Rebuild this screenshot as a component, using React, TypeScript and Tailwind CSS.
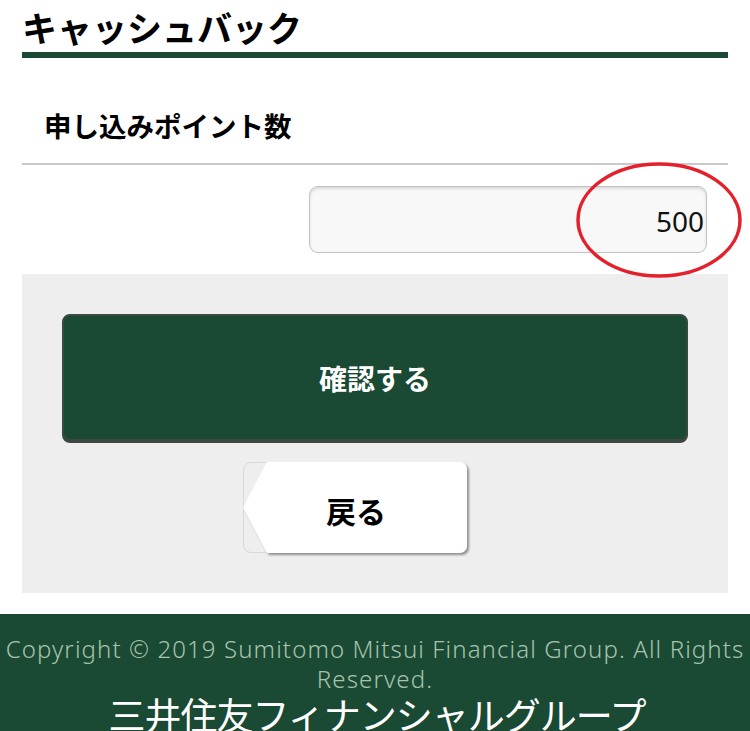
import React from "react";

const jp = { fontFamily: '"Noto Sans CJK JP", "Noto Sans", sans-serif' };

export default function App() {
  return (
    <div className="relative w-[750px] h-[731px] overflow-hidden bg-white" style={jp}>
      <div className="px-[22px]">
        <div className="h-[58px] border-b-[6px] border-[#1b4a34] flex items-start">
          <h1 className="text-[35px] leading-[56px] font-bold text-black -mt-[1px]">キャッシュバック</h1>
        </div>
        <div className="h-[107px] border-b-2 border-[#c9c9c9] flex items-start pt-[54px] pl-[22px]">
          <span className="text-[27.5px] font-bold text-black leading-none">申し込みポイント数</span>
        </div>
        <div className="pt-[21px] pb-[21px] flex justify-end pr-[21px]">
          <div className="w-[398px] h-[67px] rounded-[9px] border border-[#c2c2c2] bg-[#f8f8f8] shadow-[inset_0_2px_3px_rgba(0,0,0,0.12)] flex items-center justify-end pr-[2px]">
            <span className="text-[28px] text-[#111] leading-none mt-[2px]" style={{ fontFamily: '"Noto Sans", sans-serif' }}>500</span>
          </div>
        </div>
        <div className="bg-[#eeeeee] px-[40px] pt-[40px] pb-[40px]">
          <div className="h-[127px] rounded-[8px] bg-[#1a4a33] border-2 border-[#3a4a40] shadow-[0_2px_0_#3f4742] flex items-center justify-center">
            <span className="text-[28px] font-bold text-white leading-none">確認する</span>
          </div>
          <div className="mt-[21px] flex justify-center">
            <div className="relative ml-[-40px] w-[224px] h-[91px]">
              <div className="absolute inset-0 rounded-[8px] border border-[#d8d8d8]" style={{ clipPath: "polygon(0 0, 30px 0, 30px 100%, 0 100%)" }} />
              <div className="absolute inset-0 drop-shadow-[2px_2px_1px_rgba(60,70,65,0.55)]">
                <div
                  className="w-full h-full bg-white rounded-r-[7px]"
                  style={{ clipPath: "polygon(24px 0, 100% 0, 100% 100%, 24px 100%, 0 50%)" }}
                />
              </div>
              <div className="absolute inset-0 flex items-center justify-center pl-[2px] pt-[4px]">
                <span className="text-[30px] font-bold text-black leading-none">戻る</span>
              </div>
            </div>
          </div>
        </div>
      </div>
      <div className="mt-[21px] bg-[#1a4a33] h-[200px] pt-[20px] flex flex-col items-center">
        <p className="text-[24px] leading-[30px] text-[#a7c3ae] text-center font-light tracking-[1.1px] whitespace-nowrap" style={{ fontFamily: '"Noto Sans", "Noto Sans CJK JP", sans-serif' }}>
          Copyright © 2019 Sumitomo Mitsui Financial Group. All Rights
          <br />
          Reserved.
        </p>
        <p className="mt-0 text-[37px] leading-[40px] text-white tracking-[-1px] ml-[4px] whitespace-nowrap">三井住友フィナンシャルグループ</p>
      </div>
      <svg className="absolute left-0 top-0 pointer-events-none" width="750" height="731">
        <ellipse cx="659" cy="220" rx="81" ry="56" fill="none" stroke="#e3202b" strokeWidth="3.5" />
      </svg>
    </div>
  );
}
